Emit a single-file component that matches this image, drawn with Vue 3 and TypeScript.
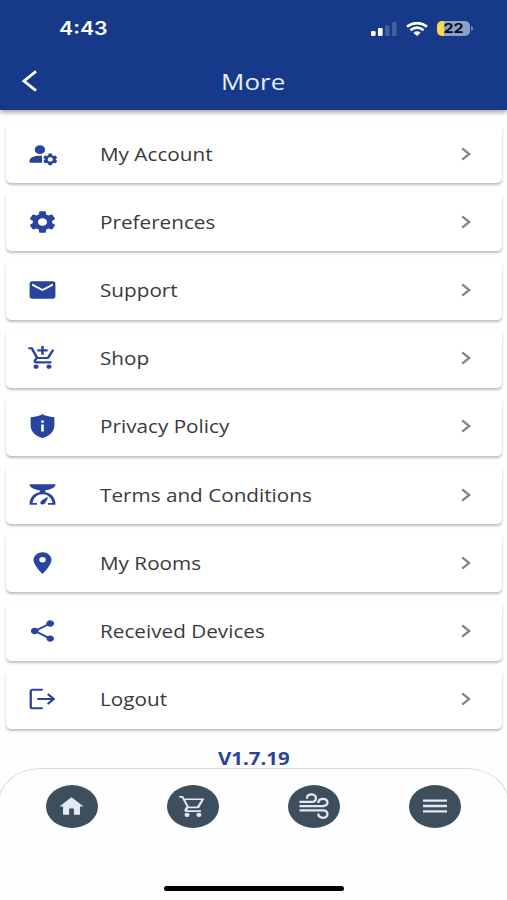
<script setup lang="ts">
interface MenuItem {
  label: string
  paths: string[]
}

const menu: MenuItem[] = [
  {
    label: 'My Account',
    paths: [
      'M10 4a4 4 0 1 0 0 8 4 4 0 0 0 0-8z',
      'M10 13.500c-4.400 0-8 1.800-8 4.300V20h9.600v-6.400z',
      'M16.800 11.600l-.5 1.700-.85.500-1.600-.45-1.300 2.250 1.200 1v.8l-1.200 1 1.300 2.250 1.600-.45.850.5.5 1.700h2.400l.5-1.700.85-.5 1.600.45 1.300-2.250-1.200-1v-.8l1.200-1-1.300-2.250-1.600.45-.85-.5-.5-1.700zM18 15a2 2 0 1 1 0 4 2 2 0 0 1 0-4z',
    ],
  },
  {
    label: 'Preferences',
    paths: [
      'M12,15.5A3.5,3.5 0 0,1 8.5,12A3.5,3.5 0 0,1 12,8.5A3.5,3.5 0 0,1 15.5,12A3.5,3.5 0 0,1 12,15.5M19.43,12.97C19.47,12.65 19.5,12.33 19.5,12C19.5,11.67 19.47,11.34 19.43,11L21.54,9.37C21.73,9.22 21.78,8.95 21.66,8.73L19.66,5.27C19.54,5.05 19.27,4.96 19.05,5.05L16.56,6.05C16.04,5.66 15.5,5.32 14.87,5.07L14.5,2.42C14.46,2.18 14.25,2 14,2H10C9.75,2 9.54,2.18 9.5,2.42L9.13,5.07C8.5,5.32 7.96,5.66 7.44,6.05L4.95,5.05C4.73,4.96 4.46,5.05 4.34,5.27L2.34,8.73C2.21,8.95 2.27,9.22 2.46,9.37L4.57,11C4.53,11.34 4.5,11.67 4.5,12C4.5,12.33 4.53,12.65 4.57,12.97L2.46,14.63C2.27,14.78 2.21,15.05 2.34,15.27L4.34,18.73C4.46,18.95 4.73,19.03 4.95,18.95L7.44,17.94C7.96,18.34 8.5,18.68 9.13,18.93L9.5,21.58C9.54,21.82 9.75,22 10,22H14C14.25,22 14.46,21.82 14.5,21.58L14.87,18.93C15.5,18.67 16.04,18.34 16.56,17.94L19.05,18.95C19.27,19.03 19.54,18.95 19.66,18.73L21.66,15.27C21.78,15.05 21.73,14.78 21.54,14.63L19.43,12.97Z',
    ],
  },
  {
    label: 'Support',
    paths: ['M20 4H4c-1.100 0-2 .9-2 2v12c0 1.100.9 2 2 2h16c1.100 0 2-.9 2-2V6c0-1.100-.9-2-2-2zm0 4l-8 5-8-5V6l8 5 8-5z'],
  },
  {
    label: 'Shop',
    paths: [
      'M11 9h2V6h3V4h-3V1h-2v3H8v2h3v3zm-4 9c-1.1 0-1.990.9-1.990 2S5.900 22 7 22s2-.9 2-2-.9-2-2-2zm10 0c-1.100 0-1.990.9-1.990 2s.89 2 1.990 2 2-.9 2-2-.9-2-2-2zm-9.830-3.250l.03-.12.9-1.630h7.450c.75 0 1.410-.41 1.750-1.030l3.860-7.010L19.420 4h-.01l-1.100 2-2.760 5H8.530l-.13-.27L6.160 6l-.95-2-.94-2H1v2h2l3.600 7.590-1.350 2.450c-.16.280-.25.610-.25.960 0 1.100.9 2 2 2h12v-2H7.420c-.13 0-.25-.11-.25-.25z',
    ],
  },
  {
    label: 'Privacy Policy',
    paths: [
      'M12 1Q9.300 3.400 2.800 4v7.500C2.800 17.300 7 21.400 12 23c5-1.600 9.200-5.700 9.200-11.500V4Q14.700 3.400 12 1zM11 7h2v2h-2zM11 10.500h2V17h-2z',
    ],
  },
  {
    label: 'Terms and Conditions',
    paths: [
      'M2 2h20v1.300c-1.500 2.700-4.200 4.100-7.800 4.300v1.800c4.400 1 7.400 4.600 7.800 9.600v2h-5.700v-1.700h3.400c-.6-4.900-3.400-8.100-7.700-8.100s-7.100 3.200-7.700 8.100h3.400V21H2v-2c.4-5 3.400-8.600 7.800-9.600V7.600C6.200 7.400 3.500 6 2 3.300z',
      'M16.400 13.700c-.7 2.500-1.500 4.600-2.600 6.100-.7 1-1.800 1.300-2.700.8-.9-.6-1.100-1.700-.4-2.600 1.100-1.400 3-2.800 5.700-4.300z',
    ],
  },
  {
    label: 'My Rooms',
    paths: [
      'M12,11.5A2.5,2.5 0 0,1 9.5,9A2.5,2.5 0 0,1 12,6.5A2.5,2.5 0 0,1 14.5,9A2.5,2.5 0 0,1 12,11.5M12,2A7,7 0 0,0 5,9C5,14.25 12,22 12,22C12,22 19,14.25 19,9A7,7 0 0,0 12,2Z',
    ],
  },
  {
    label: 'Received Devices',
    paths: [
      'M18 16.080c-.76 0-1.440.3-1.960.77L8.910 12.700c.05-.23.09-.46.09-.7s-.04-.47-.09-.7l7.050-4.110c.54.5 1.250.81 2.040.81 1.660 0 3-1.340 3-3s-1.340-3-3-3-3 1.340-3 3c0 .24.04.47.09.7L8.040 9.810C7.500 9.310 6.790 9 6 9c-1.660 0-3 1.340-3 3s1.340 3 3 3c.79 0 1.500-.31 2.040-.81l7.120 4.160c-.05.21-.08.43-.08.65 0 1.610 1.310 2.920 2.920 2.920 1.610 0 2.920-1.310 2.920-2.920s-1.310-2.920-2.920-2.920z',
    ],
  },
  {
    label: 'Logout',
    paths: [
      'M12.200 2.500v1.900H4.500c-.4 0-.7.3-.7.7v13.800c0 .4.3.7.7.7h7.700v1.900H4.200C3 21.500 2 20.500 2 19.300V4.700c0-1.200 1-2.200 2.200-2.200z',
      'M16.700 6.700L22 12l-5.300 5.300-1.300-1.300 3.100-3.100H8v-1.800h10.500L15.400 8z',
    ],
  },
]
</script>

<template>
  <main class="screen">
    <header class="header">
      <div class="status">
        <span class="time">4:43</span>
        <div class="indicators">
          <svg class="signal" viewBox="0 0 26 14">
            <rect x="0" y="9" width="4.600" height="5" rx="1.300" fill="#fff" />
            <rect x="7" y="6" width="4.600" height="8" rx="1.300" fill="#fff" />
            <rect x="14" y="3.300" width="4.600" height="10.700" rx="1.300" fill="#43619f" />
            <rect x="21" y="0" width="4.600" height="14" rx="1.300" fill="#43619f" />
          </svg>
          <svg class="wifi" viewBox="0 0 22 14" preserveAspectRatio="none" fill="none" stroke="#fff">
            <path d="M1 4.700Q11-2.500 21 4.700" stroke-width="2.700" />
            <path d="M4.400 8.200Q11 3.200 17.600 8.200" stroke-width="2.600" />
            <path d="M7.400 10.800Q11 7.900 14.600 10.800L11 13.900z" fill="#fff" stroke="none" />
          </svg>
          <div class="battery-wrap">
            <div class="battery"><span class="level">22</span></div>
            <i class="nub"></i>
          </div>
        </div>
      </div>
      <div class="titlebar">
        <svg class="back" viewBox="0 0 16 22" fill="none" stroke="#fff" stroke-width="2.800">
          <path d="M14 1.400L2 11l12 9.600" />
        </svg>
        <h1 class="title"><span>More</span></h1>
      </div>
    </header>

    <nav class="menu">
      <a v-for="item in menu" :key="item.label" class="card">
        <svg class="icon" viewBox="0 0 24 24" preserveAspectRatio="none" fill-rule="evenodd">
          <path v-for="d in item.paths" :key="d" :d="d" />
        </svg>
        <span class="label">{{ item.label }}</span>
        <svg class="chevron" viewBox="0 0 10 14" fill="none" stroke="#858585" stroke-width="2.300">
          <path d="M1.200 1.300L8.200 7l-7 5.700" />
        </svg>
      </a>
    </nav>

    <p class="version"><span>V1.7.19</span></p>

    <footer class="tabs">
      <div class="tab-row">
        <button class="tab" aria-label="Home">
          <svg viewBox="0 0 24 24" preserveAspectRatio="none" fill="#e4e8f1"><path d="M10 20v-6h4v6h5v-8h3L12 3 2 12h3v8z" /></svg>
        </button>
        <button class="tab" aria-label="Cart">
          <svg viewBox="0 0 24 24" preserveAspectRatio="none" fill="#e4e8f1">
            <path fill-rule="evenodd" d="M1 2v1.700h2.200l3.800 8.200-1.400 2.400c-.9 1.300.1 2.900 1.500 2.900H19v-1.600H7.400l1.100-2h7.600c.8 0 1.400-.4 1.700-1L21.900 4.200H5.300L4.300 2zm5.100 3.800h13.200l-3.600 6.100H8.800z" />
            <ellipse cx="7.500" cy="20" rx="2.100" ry="2.100" /><ellipse cx="17.300" cy="20" rx="2.100" ry="2.100" />
          </svg>
        </button>
        <button class="tab" aria-label="Air">
          <svg class="air" viewBox="0 0 30 26" fill="none" stroke="#e4e8f1" stroke-width="2.300">
            <path d="M.5 8.900H12.500c6 0 5.600-7.500.4-7.500-3 0-5 1.600-5 4.300" />
            <path d="M.5 13.100h23.500c6.200 0 5.600-7.300.3-7.300-3 0-5 1.500-5 4.200" />
            <path d="M.5 17.400h23.500c6.200 0 5.600 7.400.3 7.400-3 0-5-1.500-5-4.300" />
          </svg>
        </button>
        <button class="tab" aria-label="Menu">
          <svg class="bars" viewBox="0 0 24 14" stroke="#e4e8f1" stroke-width="2.300">
            <path d="M0 1.700h24M0 7h24M0 12.300h24" />
          </svg>
        </button>
      </div>
      <div class="home-indicator"></div>
    </footer>
  </main>
</template>

<style>
body {
  margin: 0;
  background: #fefefe;
}
</style>

<style scoped>
.screen {
  width: 507px;
  height: 900px;
  display: flex;
  flex-direction: column;
  overflow: hidden;
  background: #fefefe;
  font-family: 'Open Sans', sans-serif;
}
.header {
  position: relative;
  z-index: 1;
  flex: none;
  height: 110px;
  background: #17398a;
  box-shadow: 0 2px 5px rgba(0, 0, 0, 0.4);
}
.status {
  height: 57px;
  box-sizing: border-box;
  padding: 0 34px 0 59px;
  display: flex;
  align-items: center;
  justify-content: space-between;
}
.time {
  font: 600 18px/20px Inter, sans-serif;
  color: #fff;
  transform: scaleX(1.18);
  transform-origin: left;
}
.indicators {
  display: flex;
  align-items: center;
}
.signal {
  width: 26px;
  height: 14px;
  margin-right: 9px;
}
.wifi {
  width: 22px;
  height: 14px;
  margin-right: 9px;
}
.battery-wrap {
  display: flex;
  align-items: center;
  gap: 1px;
}
.battery {
  width: 33px;
  height: 15px;
  border-radius: 5px;
  background: linear-gradient(90deg, #fbd84b 0 7px, #8ba0cb 7px);
  display: flex;
  align-items: center;
  justify-content: center;
}
.level {
  font: 700 13.500px/15px Inter, sans-serif;
  color: #080b14;
  transform: scaleX(1.18);
}
.nub {
  width: 2px;
  height: 5px;
  border-radius: 0 2px 2px 0;
  background: #6f86b8;
}
.titlebar {
  height: 48px;
  padding: 0 22px;
  display: grid;
  grid-template-columns: 16px 1fr 16px;
  align-items: center;
}
.back {
  width: 16px;
  height: 22px;
}
.title {
  margin: 0;
  text-align: center;
  color: #e8eefb;
  font-size: 22px;
  font-weight: 400;
  line-height: 30px;
}
.title span {
  display: inline-block;
  transform: scaleX(1.18);
}
.menu {
  flex: none;
  padding: 14.200px 5px 0 6px;
  display: flex;
  flex-direction: column;
  gap: 9.200px;
}
.card {
  height: 59px;
  box-sizing: border-box;
  padding: 0 31px 0 21px;
  display: grid;
  grid-template-columns: 31px 1fr 10px;
  column-gap: 42px;
  align-items: center;
  border-radius: 5px;
  background: #fff;
  box-shadow: 0 2px 2.500px rgba(0, 0, 0, 0.25);
}
.icon {
  width: 31px;
  height: 26px;
  fill: #28449d;
}
.label {
  justify-self: start;
  font-size: 17.500px;
  line-height: 24px;
  color: #3a3a3a;
  white-space: nowrap;
  transform: scaleX(1.183);
  transform-origin: left;
}
.chevron {
  width: 10px;
  height: 14px;
}
.version {
  flex: none;
  height: 39.300px;
  margin: 0;
  padding-top: 19.300px;
  box-sizing: border-box;
  line-height: 22px;
  font-size: 17px;
  font-weight: 700;
  text-align: center;
  color: #28449d;
}
.version span {
  display: inline-block;
  transform: scaleX(1.2);
}
.tabs {
  flex: 1;
  margin: 0 -2px;
  box-sizing: border-box;
  display: flex;
  flex-direction: column;
  align-items: center;
  justify-content: space-between;
  padding: 16px 0 9px;
  border: 1.500px solid #dcdcdc;
  border-bottom: 0;
  border-radius: 42px 42px 0 0 / 35px 35px 0 0;
  background: #fefefe;
}
.tab-row {
  display: flex;
  gap: 69.300px;
}
.tab {
  width: 52px;
  height: 43px;
  padding: 0;
  border: 0;
  border-radius: 50%;
  background: #3d4f5d;
  display: flex;
  align-items: center;
  justify-content: center;
}
.tab svg {
  width: 29px;
  height: 25px;
}
.tab .air {
  width: 30px;
  height: 26px;
}
.tab .bars {
  width: 24px;
  height: 14px;
}
.home-indicator {
  width: 180px;
  height: 5px;
  border-radius: 3px;
  background: #000;
}
</style>
